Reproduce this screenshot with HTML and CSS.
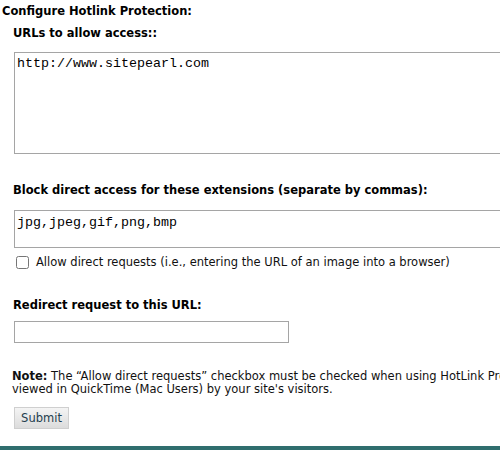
FILE: index.html
```html
<!DOCTYPE html>
<html>
<head>
<meta charset="utf-8">
<link rel="stylesheet" href="styles.css">
</head>
<body>
<div class="page">
  <div class="title">Configure Hotlink Protection:</div>
  <div class="form">
    <div class="label label-urls">URLs to allow access::</div>
    <textarea class="area area-urls" spellcheck="false">http://www.sitepearl.com</textarea>
    <div class="label label-ext">Block direct access for these extensions (separate by commas):</div>
    <textarea class="area area-ext" spellcheck="false">jpg,jpeg,gif,png,bmp</textarea>
    <label class="check-row"><input type="checkbox" class="check"><span>Allow direct requests (i.e., entering the URL of an image into a browser)</span></label>
    <div class="label label-redirect">Redirect request to this URL:</div>
    <input type="text" class="url-input">
    <p class="note"><b>Note:</b> The “Allow direct requests” checkbox must be checked when using HotLink Protection to ensure media files can be<br>viewed in QuickTime (Mac Users) by your site's visitors.</p>
    <button class="submit" type="button">Submit</button>
  </div>
  <div class="bar"></div>
</div>
</body>
</html>
```

FILE: styles.css
```css
html, body {
  margin: 0;
  padding: 0;
  background: #fff;
}
body {
  font-family: "DejaVu Sans", Verdana, sans-serif;
  font-size: 11.5px;
  color: #000;
  overflow: hidden;
}
.page {
  width: 500px;
  height: 450px;
  position: relative;
  overflow: hidden;
}
.title {
  font-weight: bold;
  line-height: 14px;
  padding: 4px 0 0 2px;
}
.form {
  padding-left: 13px;
}
.label {
  font-weight: bold;
  line-height: 14px;
}
.label-urls { margin-top: 8px; }
.area {
  display: block;
  box-sizing: border-box;
  margin: 0 0 0 1px;
  width: 520px;
  border: 1px solid #a5a5a5;
  font-family: "Liberation Mono", "Courier New", monospace;
  font-size: 13.33px;
  line-height: 15px;
  padding: 3px 2px;
  resize: none;
  color: #000;
  background: #fff;
  overflow: hidden;
}
.area-urls {
  margin-top: 12px;
  height: 102px;
}
.label-ext { margin-top: 29px; }
.area-ext {
  margin-top: 13px;
  height: 38px;
  padding-top: 4px;
}
.check-row {
  display: flex;
  align-items: center;
  gap: 7px;
  margin-top: 7px;
  line-height: 14px;
  color: #111;
}
.check {
  margin: 0 0 0 3px;
  width: 13px;
  height: 13px;
}
.label-redirect { margin-top: 29px; }
.url-input {
  display: block;
  box-sizing: border-box;
  margin: 9px 0 0 1px;
  width: 275px;
  height: 22px;
  border: 1px solid #a5a5a5;
  padding: 0 3px;
  font-family: "DejaVu Sans", sans-serif;
  font-size: 11px;
}
.note {
  margin: 27px 0 0 -1px;
  width: 900px;
  white-space: nowrap;
  line-height: 13px;
  color: #111;
}
.submit {
  display: block;
  box-sizing: border-box;
  margin: 11px 0 0 1px;
  width: 55px;
  height: 22px;
  padding: 0;
  border: 1px solid #cfcfcf;
  background: linear-gradient(#f4f4f4, #dcdcdc);
  font-family: "DejaVu Sans", sans-serif;
  font-size: 11.5px;
  color: #1f3e4e;
}
.bar {
  position: absolute;
  left: 0;
  right: 0;
  bottom: 0;
  height: 4px;
  background: #2f6e6e;
}
```
